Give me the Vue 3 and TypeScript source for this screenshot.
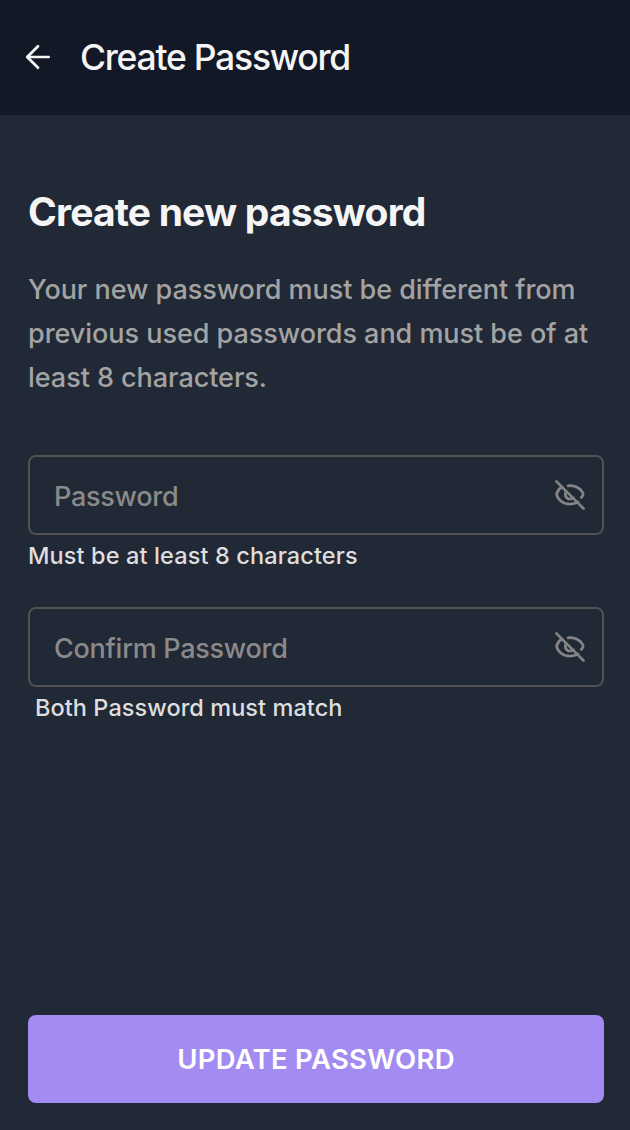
<script setup lang="ts">
import { ref } from 'vue'

interface Field {
  id: string
  placeholder: string
  hint: string
}

const fields: Field[] = [
  { id: 'password', placeholder: 'Password', hint: 'Must be at least 8 characters' },
  { id: 'confirm', placeholder: 'Confirm Password', hint: 'Both Password must match' },
]
const values = ref<Record<string, string>>({ password: '', confirm: '' })
</script>

<template>
  <div class="screen">
    <header class="topbar">
      <button class="back" type="button" aria-label="Back">
        <svg width="28" height="28" viewBox="0 0 28 28" fill="none" stroke="currentColor" stroke-width="2.7" stroke-linecap="round" stroke-linejoin="round">
          <path d="M24.7 14H3.5M14 3.2L3.2 14L14 24.8" />
        </svg>
      </button>
      <span class="bar-title">Create Password</span>
    </header>
    <main class="content">
      <h1 class="title">Create new password</h1>
      <p class="intro">
        Your new password must be different from<br />
        previous used passwords and must be of at<br />
        least 8 characters.
      </p>
      <form class="form" @submit.prevent>
        <div v-for="f in fields" :key="f.id" class="field" :class="f.id">
          <div class="box">
            <input v-model="values[f.id]" type="password" :placeholder="f.placeholder" />
            <svg class="eye" width="32" height="32" viewBox="0 0 32 32" fill="none" stroke="currentColor" stroke-width="2.7" stroke-linecap="round" stroke-linejoin="round">
              <path d="M2.4 2.4L29.6 29.6" />
              <path d="M14 6.9C21.5 5.8 27 9.7 29 14.2Q29.6 16 27.3 18.5" />
              <path d="M7.2 8.4C4.7 10.3 3 12.8 2.6 15.3C3.6 20.7 9 25.1 16 25.1Q20.8 25 24 22.9" />
              <path d="M12.1 12.7C10.1 15.4 12 20.1 16 20Q18.2 20 19.5 18.9" />
            </svg>
          </div>
          <p class="hint">{{ f.hint }}</p>
        </div>
        <button class="submit" type="submit"><span>UPDATE PASSWORD</span></button>
      </form>
    </main>
  </div>
</template>

<style>
html,
body {
  margin: 0;
  background: #222936;
}
</style>

<style scoped>
.screen {
  height: 1130px;
  display: flex;
  flex-direction: column;
  overflow: hidden;
  background: #222936;
  color: #f5f5f5;
  font-family: Inter, "Liberation Sans", sans-serif;
}
.topbar {
  height: 115px;
  flex: none;
  display: flex;
  align-items: center;
  box-sizing: border-box;
  padding: 0 24px;
  background: #121826;
}
.back {
  width: 28px;
  height: 28px;
  margin-bottom: 1px;
  padding: 0;
  border: 0;
  background: none;
  color: #f5f5f5;
}
.back svg,
.eye {
  display: block;
  flex: none;
}
.bar-title {
  margin-left: 28px;
  font-size: 35.5px;
  line-height: 44px;
  font-weight: 450;
  letter-spacing: -1.25px;
  white-space: nowrap;
}
.content {
  flex: 1;
  display: flex;
  flex-direction: column;
  padding: 73px 26px 27px 28px;
}
.title {
  margin: 0;
  font-size: 39px;
  line-height: 48px;
  font-weight: 700;
  letter-spacing: -0.82px;
  white-space: nowrap;
}
.intro {
  margin: 32px 0 0;
  font-size: 27px;
  line-height: 44px;
  font-weight: 450;
  letter-spacing: -0.04px;
  color: #a3a3a3;
  white-space: nowrap;
}
.form {
  flex: 1;
  display: flex;
  flex-direction: column;
  margin-top: 55px;
}
.field {
  height: 152px;
}
.box {
  height: 80px;
  box-sizing: border-box;
  display: flex;
  align-items: center;
  padding: 0 16px 0 24px;
  border: 2px solid #525252;
  border-radius: 8px;
}
.box input {
  flex: 1;
  min-width: 0;
  padding: 4px 0 0;
  border: 0;
  outline: 0;
  background: none;
  color: #f5f5f5;
  font: 450 27px/40px Inter, "Liberation Sans", sans-serif;
  letter-spacing: -0.27px;
}
.box input::placeholder {
  color: #8a8a8a;
  opacity: 1;
}
.eye {
  color: #858585;
}
.hint {
  margin: 4px 0 0;
  font-size: 23.5px;
  line-height: 34px;
  font-weight: 450;
  letter-spacing: 0.12px;
  color: #dedede;
  white-space: nowrap;
}
.confirm .hint {
  margin-left: 7px;
  letter-spacing: 0.06px;
}
.submit {
  height: 88px;
  flex: none;
  margin-top: auto;
  padding: 0;
  border: 0;
  border-radius: 8px;
  background: #a38bf2;
  color: #fff;
  font: 600 27.5px/40px Inter, "Liberation Sans", sans-serif;
  letter-spacing: 0.27px;
}
</style>
